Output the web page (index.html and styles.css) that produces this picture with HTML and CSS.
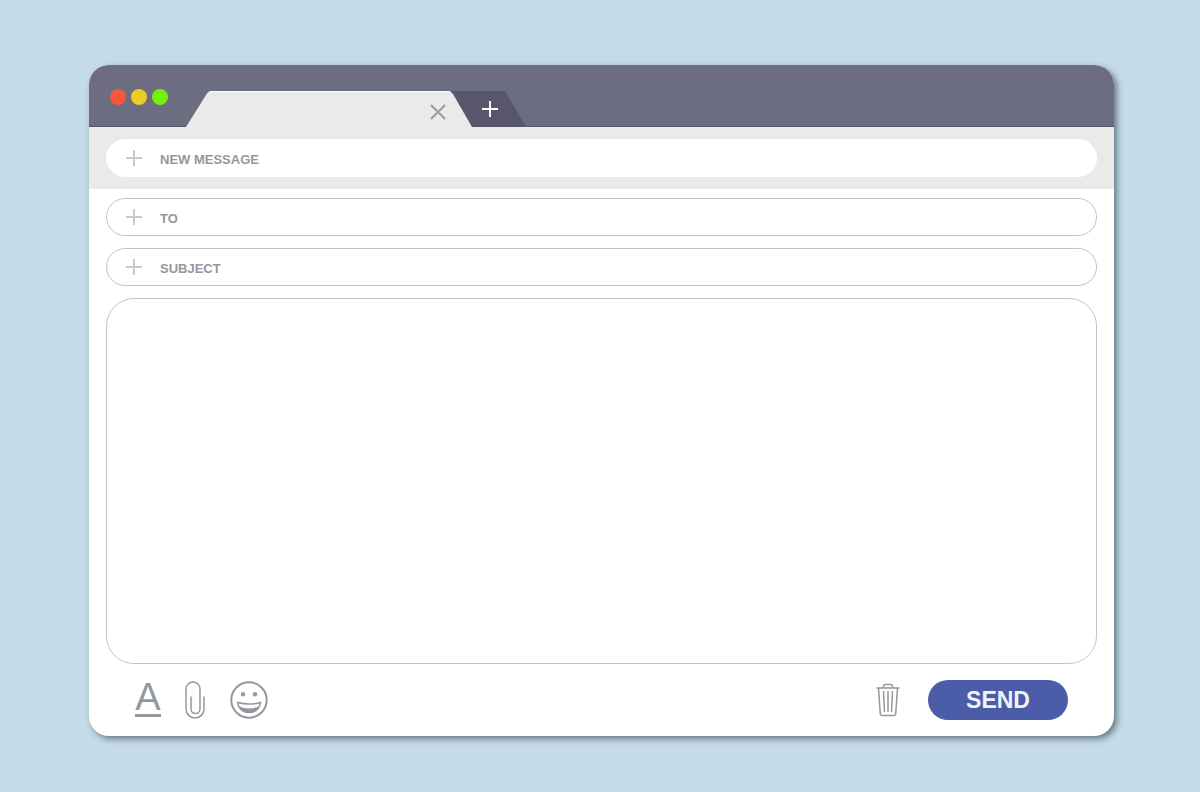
FILE: index.html
```html
<!DOCTYPE html>
<html lang="en">
<head>
    <meta charset="UTF-8">
    <meta name="viewport" content="width=device-width, initial-scale=1">
    <title>New Message</title>
    <link rel="stylesheet" href="styles.css">
</head>
<body>
    <main class="window">
        <header class="tab-bar">
            <div class="window-controls">
                <button class="dot dot-close" type="button" aria-label="Close window"></button>
                <button class="dot dot-minimize" type="button" aria-label="Minimize window"></button>
                <button class="dot dot-expand" type="button" aria-label="Expand window"></button>
            </div>
            <div class="tab">
                <button class="tab-close" type="button" aria-label="Close tab">
                    <svg width="16" height="16" viewBox="0 0 16 16"><path d="M1 1 15 15M15 1 1 15"/></svg>
                </button>
            </div>
            <button class="tab-new" type="button" aria-label="New tab">
                <svg width="16" height="16" viewBox="0 0 16 16"><path d="M8 0V16M0 8H16"/></svg>
            </button>
        </header>
        <form class="compose">
            <div class="message-bar">
                <div class="field field-plain">
                    <svg class="plus" width="16" height="16" viewBox="0 0 16 16"><path d="M8 0V16M0 8H16"/></svg>
                    <label for="title">NEW MESSAGE</label>
                    <input id="title" type="text">
                </div>
            </div>
            <div class="fields">
                <div class="field">
                    <svg class="plus" width="16" height="16" viewBox="0 0 16 16"><path d="M8 0V16M0 8H16"/></svg>
                    <label for="to">TO</label>
                    <input id="to" type="text">
                </div>
                <div class="field">
                    <svg class="plus" width="16" height="16" viewBox="0 0 16 16"><path d="M8 0V16M0 8H16"/></svg>
                    <label for="subject">SUBJECT</label>
                    <input id="subject" type="text">
                </div>
                <textarea class="message" aria-label="Message"></textarea>
            </div>
            <footer class="toolbar">
                <button class="tool tool-font" type="button" aria-label="Text format"><span>A</span></button>
                <button class="tool" type="button" aria-label="Attach file">
                    <svg width="20" height="38" viewBox="0 0 20 38">
                        <path d="M15 26V8A7 7 0 0 0 1 8V28A9 9 0 0 0 19 28V15.500M6 15.500V28A4.500 4.500 0 0 0 15 28V24"/>
                    </svg>
                </button>
                <button class="tool" type="button" aria-label="Insert emoji">
                    <svg width="40" height="38" viewBox="0 0 40 38">
                        <circle cx="20" cy="19" r="17.700" stroke-width="2"/>
                        <circle class="solid" cx="14" cy="13.200" r="2.200"/>
                        <circle class="solid" cx="26" cy="13.200" r="2.200"/>
                        <path d="M8.500 21.500Q20 24.500 31.500 21.500C30.500 28 26 31.500 20 31.500S9.500 28 8.500 21.500Z"/>
                        <path class="solid" d="M9.500 25Q20 30 30.500 25C28.500 29.500 25 32 20 32S11.500 29.500 9.500 25Z"/>
                    </svg>
                </button>
                <button class="tool tool-delete" type="button" aria-label="Delete draft">
                    <svg width="24" height="34" viewBox="0 0 24 34">
                        <path d="M0.500 5H23.500M7.500 5V3Q7.500 1.500 9 1.500H15Q16.500 1.500 16.500 3V5M2.500 5 4.300 31Q4.500 32.500 6 32.500H18Q19.500 32.500 19.700 31L21.500 5M7.500 8 8.500 29M12 8V29M16.500 8 15.500 29"/>
                    </svg>
                </button>
                <button class="send" type="submit">SEND</button>
            </footer>
        </form>
    </main>
</body>
</html>
```

FILE: styles.css
```css
* {
    box-sizing: border-box;
}
body {
    display: flex;
    min-height: 100vh;
    margin: 0;
    padding: 65px 86px 56px 89px;
    background: #c5dbe8;
    font-family: "Liberation Sans", Arial, sans-serif;
    color: #95979e;
}
button {
    padding: 0;
    border: none;
    background: none;
    color: inherit;
    font-family: inherit;
    cursor: pointer;
}
svg {
    display: block;
    fill: none;
    stroke: currentColor;
}
.window {
    flex: 1;
    display: flex;
    flex-direction: column;
    min-width: 0;
    border-radius: 20px;
    background: #fff;
    box-shadow: 3px 3px 6px rgba(50, 70, 80, 0.65);
    overflow: hidden;
}

/* tab bar */
.tab-bar {
    display: flex;
    align-items: flex-end;
    height: 62px;
    padding-left: 21px;
    background: #6c6d80;
    box-shadow: inset 0 -1px #57566a;
}
.window-controls {
    display: flex;
    align-self: center;
    gap: 5px;
    margin-right: 18px;
    padding-top: 2px;
}
.dot {
    width: 16px;
    height: 16px;
    border-radius: 50%;
}
.dot-close {
    background: #f9573b;
}
.dot-minimize {
    background: #e9cc26;
}
.dot-expand {
    background: #74f00c;
}
.tab {
    display: flex;
    align-items: center;
    justify-content: flex-end;
    z-index: 1;
    width: 286px;
    height: 36px;
    padding: 6px 26px 0 0;
    background: #eaeaea;
    box-shadow: inset 0 1px #fff;
    clip-path: path("M0 36 20 4Q22 0 26 0H262Q265 0 267 3L286 36Z");
}
.tab-close svg {
    stroke: #999ba3;
    stroke-width: 2;
}
.tab-new {
    width: 76px;
    height: 36px;
    margin-left: -22px;
    padding-left: 32px;
    background: #57566a;
    color: #fff;
    clip-path: polygon(0 0, 55px 0, 100% 100%, 22px 100%);
}
.tab-new svg {
    stroke-width: 2;
}

/* form */
.compose {
    flex: 1;
    display: flex;
    flex-direction: column;
}
.message-bar {
    padding: 12px 17px;
    background: #eaeaea;
}
.fields {
    flex: 1;
    display: flex;
    flex-direction: column;
    gap: 12px;
    padding: 9px 17px 0;
}
.field {
    display: flex;
    align-items: center;
    height: 38px;
    padding: 0 19px;
    border: 1px solid #c3c4c6;
    border-radius: 19px;
    background: #fff;
    font-size: 13px;
    font-weight: bold;
}
.field-plain {
    border-color: #fff;
}
.field label {
    padding: 2px 12px 0 18px;
}
.field input {
    flex: 1;
    min-width: 0;
    border: none;
    outline: none;
    background: none;
    color: inherit;
    font: inherit;
}
.plus {
    color: #c9c9cc;
    stroke-width: 2;
}
.message {
    flex: 1;
    width: 100%;
    min-height: 120px;
    padding: 20px;
    border: 1px solid #c3c4c6;
    border-radius: 28px;
    outline: none;
    resize: none;
    color: inherit;
    font-family: inherit;
    font-size: 16px;
}

/* toolbar */
.toolbar {
    display: flex;
    align-items: center;
    gap: 24px;
    padding: 16px 46px;
}
.tool svg {
    stroke-width: 1.5;
}
.tool .solid {
    fill: currentColor;
    stroke: none;
}
.tool-font {
    width: 26px;
    height: 34px;
    padding-bottom: 4px;
    border-bottom: 3px solid #95979e;
    font-size: 38px;
    line-height: 26px;
}
.tool-delete {
    margin-left: auto;
}
.send {
    width: 140px;
    height: 40px;
    margin-left: 4px;
    border-radius: 20px;
    background: #4b5ca9;
    color: #f2f2f4;
    font-size: 23px;
    font-weight: bold;
}
```
